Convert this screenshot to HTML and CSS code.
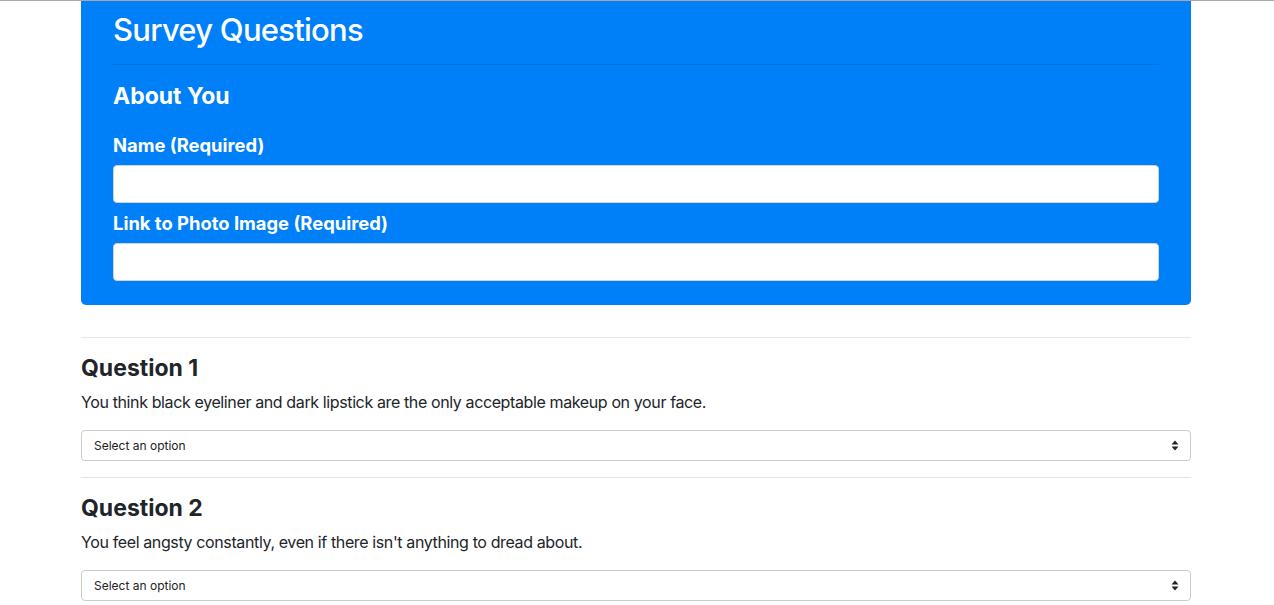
FILE: index.html
```html
<!DOCTYPE html>
<html lang="en">
<head>
<meta charset="utf-8">
<title>Survey</title>
<link rel="stylesheet" href="styles.css">
</head>
<body>
<div class="topline"></div>
<main class="container">
  <section class="jumbotron">
    <h2 class="title">Survey Questions</h2>
    <hr class="jumbo-rule">
    <h4 class="section-title">About You</h4>
    <form class="about-form">
      <label class="field-label" for="name">Name (Required)</label>
      <input class="text-input" id="name" type="text">
      <label class="field-label second" for="photo">Link to Photo Image (Required)</label>
      <input class="text-input" id="photo" type="text">
    </form>
  </section>

  <hr class="rule">
  <section class="question">
    <h4 class="q-title">Question 1</h4>
    <p class="q-text">You think black eyeliner and dark lipstick are the only acceptable makeup on your face.</p>
    <div class="select-wrap">
      <select class="select"><option>Select an option</option></select>
      <svg class="select-arrows" width="8" height="11" viewBox="0 0 8 11"><path d="M4 0.5 L7.5 4.5 L0.5 4.5 Z M4 10.5 L7.5 6.5 L0.5 6.5 Z" fill="#222"/></svg>
    </div>
  </section>

  <hr class="rule">
  <section class="question">
    <h4 class="q-title">Question 2</h4>
    <p class="q-text">You feel angsty constantly, even if there isn't anything to dread about.</p>
    <div class="select-wrap">
      <select class="select"><option>Select an option</option></select>
      <svg class="select-arrows" width="8" height="11" viewBox="0 0 8 11"><path d="M4 0.5 L7.5 4.5 L0.5 4.5 Z M4 10.5 L7.5 6.5 L0.5 6.5 Z" fill="#222"/></svg>
    </div>
  </section>
</main>
</body>
</html>
```
FILE: styles.css
```css
* { box-sizing: border-box; }
html, body { margin: 0; padding: 0; }
body {
  font-family: Inter, "Noto Sans", "Liberation Sans", sans-serif;
  font-size: 16px;
  line-height: 1.5;
  color: #212529;
  background: #fff;
}
.topline { height: 1px; background: #a9a9a9; }
.container {
  width: 1110px;
  margin-left: calc(50% - 556px);
}
.jumbotron {
  background: #0080f8;
  color: #fff;
  border-radius: 0 0 5px 5px;
  padding: 10px 32px 24px;
  margin-bottom: 32px;
}
.title {
  margin: 0 0 8px;
  font-size: 31px;
  font-weight: 500;
  line-height: 1.2;
  letter-spacing: -0.75px;
}
.jumbo-rule {
  margin: 16px 0 18px;
  border: 0;
  border-top: 1px solid rgba(0,0,0,0.1);
}
.section-title {
  margin: 0 0 22px;
  font-size: 23px;
  font-weight: 700;
  line-height: 1.2;
}
.about-form { display: flex; flex-direction: column; }
.field-label {
  font-size: 18.4px;
  font-weight: 700;
  line-height: 24px;
  margin-bottom: 8px;
}
.field-label.second { margin-top: 8px; }
.text-input {
  height: 38px;
  width: 100%;
  border: 1px solid #ced4da;
  border-radius: 4px;
  background: #fff;
  font: inherit;
  padding: 6px 12px;
}
.rule {
  margin: 16px 0 17px;
  border: 0;
  border-top: 1px solid rgba(0,0,0,0.1);
}
.q-title {
  margin: 0 0 8px;
  font-size: 23px;
  font-weight: 700;
  line-height: 27px;
}
.q-text {
  margin: 0 0 16px;
  letter-spacing: -0.38px;
}
.select-wrap { position: relative; }
.select {
  -webkit-appearance: none;
  appearance: none;
  display: block;
  width: 100%;
  height: 31px;
  border: 1px solid #ccc;
  border-radius: 4px;
  background: #fff;
  color: #222;
  font-family: inherit;
  font-size: 12px;
  padding: 0 12px;
}
.select-arrows {
  position: absolute;
  right: 12px;
  top: 10px;
  pointer-events: none;
}
```
